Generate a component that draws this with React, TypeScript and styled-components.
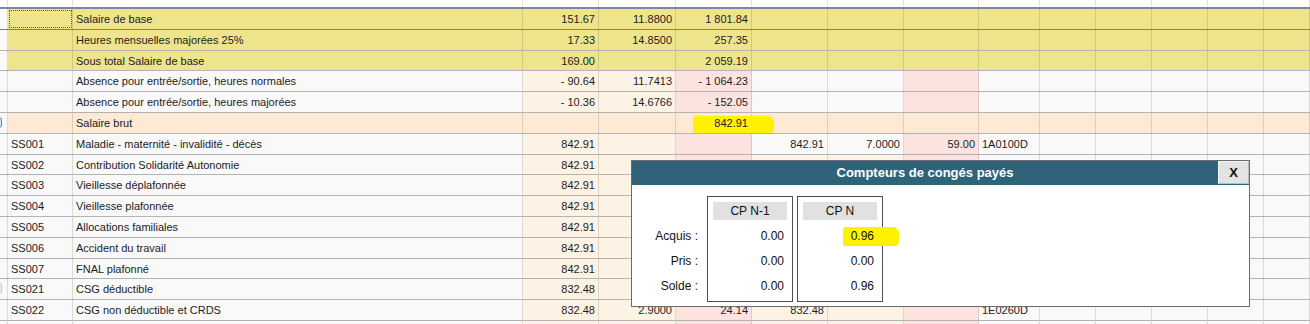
import React from "react";
import styled, { createGlobalStyle } from "styled-components";

type Tone = "white" | "yellow" | "peach" | "pink" | "brut" | "blank";
type Kind = "base" | "absence" | "brut" | "cot" | "cotFirst";

const TONES: Record<Tone, string> = {
  white: "#f9f9f9",
  yellow: "#eee48c",
  peach: "#fdf3e5",
  pink: "#fde3e0",
  brut: "#fde9d4",
  blank: "#ffffff",
};

const COLS =
  "8px 65px 450px 76px 77px 76px 76px 76px 75px 61px 56px 56px 56px 56px 46px";

const GlobalStyle = createGlobalStyle`
  html, body {
    margin: 0;
    padding: 0;
    background: #f9f9f9;
  }
  body {
    font-family: "Liberation Sans", Arial, sans-serif;
  }
`;

const Page = styled.div`
  position: relative;
  width: 1310px;
  height: 324px;
  overflow: hidden;
  background: #f9f9f9;
`;

const Sheet = styled.div`
  display: flex;
  flex-direction: column;
`;

// column titles sit above the visible area, only the grid lines remain
const HeaderRow = styled.div`
  display: grid;
  grid-template-columns: ${COLS};
  height: 9px;
  box-sizing: border-box;
  border-bottom: 2px solid #7889a1;
  background: #ffffff;
`;

const HeaderCell = styled.div`
  border-right: 1px solid rgba(0, 0, 0, 0.12);
`;

const Row = styled.div<{ $selected?: boolean }>`
  display: grid;
  grid-template-columns: ${COLS};
  height: 20.8px;
  box-sizing: border-box;
  border-bottom: 1px solid ${(p) => (p.$selected ? "#6e809a" : "#b3b3b3")};
`;

const Cell = styled.div<{ $tone: Tone; $align?: "left" | "right"; $focused?: boolean }>`
  position: relative;
  box-sizing: border-box;
  background: ${(p) => TONES[p.$tone]};
  border-right: 1px solid rgba(0, 0, 0, 0.12);
  padding: 0 3px 0 3px;
  font-size: 11px;
  line-height: 19.8px;
  color: #1c1c1c;
  text-align: ${(p) => p.$align || "left"};
  white-space: nowrap;
  ${(p) => (p.$focused ? "outline: 1px dotted #555; outline-offset: -2px;" : "")}
`;

const CellText = styled.span`
  position: relative;
  top: 1px;
  z-index: 2;
`;

const Marker = styled.span`
  position: absolute;
  z-index: 1;
  background: #fff200;
  border-radius: 3px 6px 4px 2px;
`;

const RowIcon = styled.span<{ $faint?: boolean }>`
  position: absolute;
  z-index: 1;
  left: -8px;
  top: 4px;
  width: 10px;
  height: 11px;
  box-sizing: border-box;
  border: 1px solid ${(p) => (p.$faint ? "#a9c4e4" : "#3c86d8")};
  border-radius: 3px;
  background: ${(p) => (p.$faint ? "#f0f5fb" : "#dbe9f8")};
`;

/* ---- dialog ---- */

const Dialog = styled.div`
  position: absolute;
  left: 631px;
  top: 160px;
  width: 619px;
  height: 147px;
  box-sizing: border-box;
  border: 1px solid #6b6b6b;
  background: #ffffff;
  z-index: 10;
  display: flex;
  flex-direction: column;
`;

const DialogBar = styled.div`
  display: flex;
  height: 24px;
  background: #2e6379;
`;

const DialogTitle = styled.div`
  flex: 1;
  color: #ffffff;
  font-weight: bold;
  font-size: 13px;
  line-height: 24px;
  text-align: center;
`;

const CloseButton = styled.button`
  width: 31px;
  height: 23px;
  margin: 0;
  padding: 0;
  box-sizing: border-box;
  border: 1px solid #f4f4f4;
  border-right-color: #bdbdbd;
  border-bottom-color: #bdbdbd;
  background: #e3e3e3;
  font: bold 13px "Liberation Sans", Arial, sans-serif;
  color: #111;
`;

const DialogBody = styled.div`
  display: flex;
  align-items: flex-start;
  padding-top: 11px;
`;

const Labels = styled.div`
  width: 66px;
  margin-right: 9px;
  padding-top: 27.5px;
  display: flex;
  flex-direction: column;
`;

const Label = styled.div`
  height: 25px;
  line-height: 25px;
  text-align: right;
  font-size: 12px;
  color: #111;
`;

const Counters = styled.div`
  display: flex;
  gap: 4px;
`;

const Counter = styled.div`
  width: 86px;
  box-sizing: border-box;
  border: 1px solid #4f4f4f;
  padding: 5px 5px 2px;
`;

const CounterHead = styled.div`
  height: 18px;
  background: #e1e1e1;
  text-align: center;
  font-size: 12px;
  line-height: 18px;
  color: #111;
  margin-bottom: 3.5px;
`;

const Value = styled.div`
  position: relative;
  height: 25px;
  line-height: 25px;
  text-align: right;
  padding-right: 3px;
  font-size: 12px;
  color: #111;
`;

const ValueText = styled.span`
  position: relative;
  z-index: 2;
`;

/* ---- data ---- */

type Line = {
  kind: Kind;
  code?: string;
  label?: string;
  v?: string[];
  selected?: boolean;
  marked?: boolean;
  icon?: "strong" | "faint";
};

const lines: Line[] = [
  { kind: "base", label: "Salaire de base", v: ["151.67", "11.8800", "1 801.84"], selected: true },
  { kind: "base", label: "Heures mensuelles majorées 25%", v: ["17.33", "14.8500", "257.35"] },
  { kind: "base", label: "Sous total Salaire de base", v: ["169.00", "", "2 059.19"] },
  { kind: "absence", label: "Absence pour entrée/sortie, heures normales", v: ["- 90.64", "11.7413", "- 1 064.23"] },
  { kind: "absence", label: "Absence pour entrée/sortie, heures majorées", v: ["- 10.36", "14.6766", "- 152.05"] },
  { kind: "brut", label: "Salaire brut", v: ["", "", "842.91"], marked: true, icon: "strong" },
  { kind: "cotFirst", code: "SS001", label: "Maladie - maternité - invalidité - décès", v: ["842.91", "", "", "842.91", "7.0000", "59.00", "1A0100D"] },
  { kind: "cot", code: "SS002", label: "Contribution Solidarité Autonomie", v: ["842.91"] },
  { kind: "cot", code: "SS003", label: "Vieillesse déplafonnée", v: ["842.91"] },
  { kind: "cot", code: "SS004", label: "Vieillesse plafonnée", v: ["842.91"] },
  { kind: "cot", code: "SS005", label: "Allocations familiales", v: ["842.91"] },
  { kind: "cot", code: "SS006", label: "Accident du travail", v: ["842.91"] },
  { kind: "cot", code: "SS007", label: "FNAL plafonné", v: ["842.91"] },
  { kind: "cot", code: "SS021", label: "CSG déductible", v: ["832.48"], icon: "faint" },
  { kind: "cot", code: "SS022", label: "CSG non déductible et CRDS", v: ["832.48", "2.9000", "24.14", "832.48", "", "", "1E0260D"] },
  { kind: "cot" },
];

function toneFor(kind: Kind, col: number): Tone {
  if (col === 0) return "white";
  if (kind === "base") return "yellow";
  if (kind === "brut") return "brut";
  if (col === 3 || col === 4) return "peach";
  if (col === 5 || col === 8) return "pink";
  if ((col === 6 || col === 7) && kind === "cot") return "peach";
  return "white";
}

function SheetRow({ line }: { line: Line }) {
  const v = line.v || [];
  const cells = [];
  for (let col = 0; col < 15; col++) {
    const tone = toneFor(line.kind, col);
    let text = "";
    let align: "left" | "right" = "left";
    if (col === 1) text = line.code || "";
    else if (col === 2) text = line.label || "";
    else if (col >= 3 && col <= 9) {
      text = v[col - 3] || "";
      align = col === 9 ? "left" : "right";
    }
    cells.push(
      <Cell key={col} $tone={tone} $align={align} $focused={line.selected && col === 1}>
        {col === 0 && line.icon && <RowIcon $faint={line.icon === "faint"} />}
        {col === 5 && line.marked && (
          <Marker style={{ left: 17, top: 3, width: 81, height: 17 }} />
        )}
        <CellText>{text}</CellText>
      </Cell>
    );
  }
  return <Row $selected={line.selected}>{cells}</Row>;
}

export default function App() {
  return (
    <Page>
      <GlobalStyle />
      <Sheet>
        <HeaderRow>
          {Array.from({ length: 15 }).map((_, i) => (
            <HeaderCell key={i} />
          ))}
        </HeaderRow>
        {lines.map((line, i) => (
          <SheetRow key={i} line={line} />
        ))}
      </Sheet>

      <Dialog>
        <DialogBar>
          <DialogTitle>Compteurs de congés payés</DialogTitle>
          <CloseButton>X</CloseButton>
        </DialogBar>
        <DialogBody>
          <Labels>
            <Label>Acquis :</Label>
            <Label>Pris :</Label>
            <Label>Solde :</Label>
          </Labels>
          <Counters>
            <Counter>
              <CounterHead>CP N-1</CounterHead>
              <Value>0.00</Value>
              <Value>0.00</Value>
              <Value>0.00</Value>
            </Counter>
            <Counter>
              <CounterHead>CP N</CounterHead>
              <Value>
                <Marker style={{ left: 40, top: 3, width: 56, height: 19 }} />
                <ValueText>0.96</ValueText>
              </Value>
              <Value>0.00</Value>
              <Value>0.96</Value>
            </Counter>
          </Counters>
        </DialogBody>
      </Dialog>
    </Page>
  );
}
